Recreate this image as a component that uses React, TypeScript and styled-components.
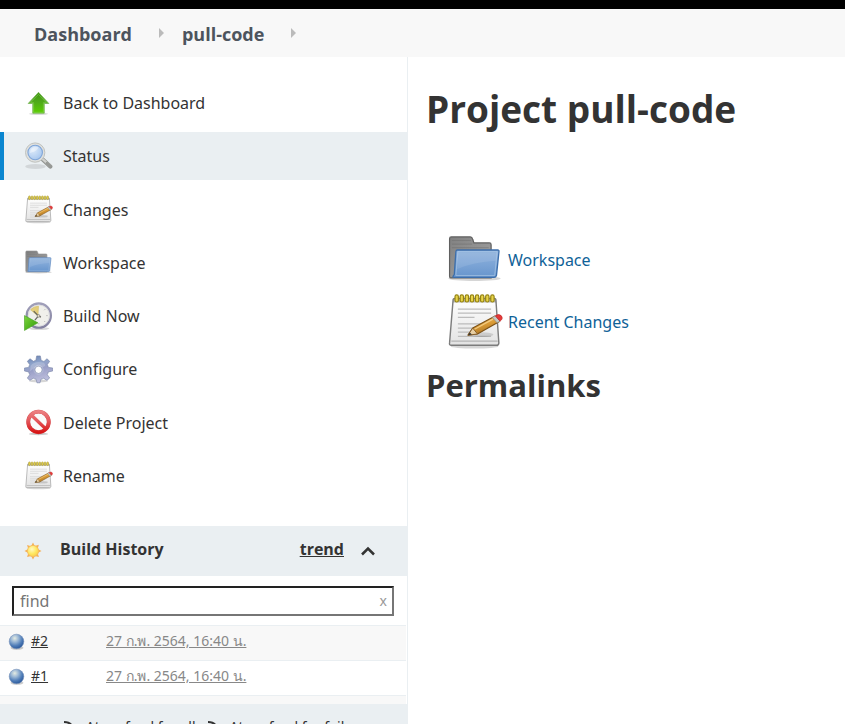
import React, { useId, useState } from "react";
import styled, { createGlobalStyle, css } from "styled-components";

const colors = {
  text: "#333333",
  crumb: "#4d545d",
  link: "#0f6298",
  panel: "#eaeff2",
  soft: "#f8f8f8",
  accent: "#0b86d0",
  muted: "#888888",
};

const GlobalStyle = createGlobalStyle`
  *, *::before, *::after { box-sizing: border-box; }
  body {
    margin: 0;
    background: #ffffff;
    color: ${colors.text};
    font-family: "Noto Sans", "Open Sans", sans-serif;
    font-size: 16px;
    line-height: 24px;
  }
  a { color: inherit; text-decoration: none; }
  ul, ol, h1, h2 { margin: 0; padding: 0; }
  ul, ol { list-style: none; }
`;

const Page = styled.div`
  display: flex;
  flex-direction: column;
  height: 100vh;
  overflow: hidden;
`;

const TopStrip = styled.header`
  flex: none;
  height: 9px;
  background: #000000;
`;

const Breadcrumbs = styled.nav`
  flex: none;
  height: 48px;
  padding: 2px 0 0 34px;
  background: ${colors.soft};
`;

const CrumbList = styled.ol`
  display: flex;
  align-items: center;
  height: 100%;
`;

const Crumb = styled.li`
  display: flex;
  align-items: center;
  color: ${colors.crumb};
  font-family: "Open Sans", sans-serif;
  font-size: 18px;
  font-weight: 700;
  line-height: 24px;
`;

const CrumbArrow = styled.svg`
  display: block;
  width: 5px;
  height: 10px;
  margin: 0 18px 2px 27px;
`;

const Body = styled.div`
  display: flex;
  flex: 1;
  min-height: 0;
`;

const Sidebar = styled.aside`
  flex: 0 0 408px;
  border-right: 1px solid ${colors.panel};
`;

const Tasks = styled.nav`
  padding: 22px 0 26px;
`;

const TaskList = styled.ul`
  display: flex;
  flex-direction: column;
  justify-content: space-between;
  min-height: 421px;
`;

const TaskLink = styled.a<{ $active?: boolean }>`
  display: flex;
  align-items: center;
  gap: 10px;
  height: 48px;
  padding-left: 20px;
  border-left: 4px solid transparent;
  ${({ $active }) =>
    $active &&
    css`
      background: ${colors.panel};
      border-left-color: ${colors.accent};
    `}
`;

const Icon = styled.svg<{ $size: number }>`
  display: block;
  flex: none;
  width: ${({ $size }) => $size}px;
  height: ${({ $size }) => $size}px;
`;

const PanelHeader = styled.div`
  display: flex;
  align-items: center;
  height: 50px;
  padding: 0 31px 4px 24px;
  background: ${colors.panel};
`;

const Weather = styled.span`
  display: flex;
  margin-top: 4px;
`;

const PanelTitle = styled.h2`
  flex: 1;
  margin-left: 18px;
  font-family: "Open Sans", sans-serif;
  font-size: 16px;
  font-weight: 700;
  line-height: 24px;
`;

const TrendLink = styled.a`
  margin-right: 16px;
  font-weight: 700;
  font-family: "Open Sans", sans-serif;
  text-decoration: underline;
`;

const CollapseButton = styled.button`
  display: flex;
  margin-top: 4px;
  padding: 0;
  border: 0;
  background: none;
  color: ${colors.text};
`;

const SearchBox = styled.div`
  display: flex;
  align-items: center;
  height: 30px;
  margin: 10px 13px 9px 12px;
  border: 2px solid;
  border-color: #222222 #767676 #767676 #222222;
`;

const SearchInput = styled.input`
  flex: 1;
  min-width: 0;
  padding: 0 6px;
  border: 0;
  outline: 0;
  background: transparent;
  color: ${colors.text};
  font: inherit;
  &::placeholder { color: #767676; opacity: 1; }
`;

const ClearButton = styled.button`
  padding: 0 5px;
  border: 0;
  background: none;
  color: #999999;
  font: inherit;
  font-size: 14px;
  line-height: 20px;
`;

const BuildTable = styled.table`
  width: calc(100% - 1px);
  border-collapse: separate;
  border-spacing: 0;
  font-size: 14px;
  line-height: 20px;
`;

const BuildRow = styled.tr`
  height: 35px;
  &:nth-child(odd) { background: ${colors.soft}; }
`;

const BuildCell = styled.td<{ $width?: number }>`
  width: ${({ $width }) => ($width ? `${$width}px` : "auto")};
  padding: 0 0 4px;
  border-top: 1px solid ${colors.panel};
  vertical-align: middle;
`;

const BuildName = styled.span`
  display: flex;
  align-items: center;
  gap: 6px;
  padding-left: 8px;
`;

const BuildLink = styled.a<{ $muted?: boolean }>`
  color: ${({ $muted }) => ($muted ? colors.muted : colors.text)};
  text-decoration: underline;
`;

const BuildEnd = styled.div`
  height: 9px;
  margin-right: 1px;
  border-top: 1px solid ${colors.panel};
  background: ${colors.soft};
`;

const Feeds = styled.div`
  display: flex;
  justify-content: flex-end;
  gap: 10px;
  padding: 13px 34px 12px 12px;
  background: ${colors.panel};
  font-size: 14px;
  line-height: 20px;
  white-space: nowrap;
`;

const FeedLink = styled.a`
  display: flex;
  align-items: center;
  gap: 12px;
`;

const Main = styled.main`
  flex: 1;
  min-width: 0;
  padding: 26px 18px;
`;

const Title = styled.h1`
  font-family: "Open Sans", sans-serif;
  font-size: 37px;
  font-weight: 700;
  line-height: 52px;
`;

const Shortcuts = styled.ul`
  display: flex;
  flex-direction: column;
  gap: 5px;
  margin: 96px 0 0 20px;
`;

const ShortcutLink = styled.a`
  display: flex;
  align-items: center;
  gap: 5px;
  color: ${colors.link};
`;

const Subtitle = styled.h2`
  margin-top: 12px;
  font-family: "Open Sans", sans-serif;
  font-size: 31px;
  font-weight: 700;
  line-height: 46px;
`;

type IconProps = { size?: number };

function ArrowUpIcon({ size = 29 }: IconProps) {
  const id = useId();
  return (
    <Icon $size={size} viewBox="0 0 48 48" aria-hidden="true">
      <defs>
        <linearGradient id={id} x1="0" y1="0" x2="0" y2="1">
          <stop offset="0" stopColor="#3f9412" />
          <stop offset=".45" stopColor="#4fa91a" />
          <stop offset="1" stopColor="#5cd000" />
        </linearGradient>
      </defs>
      <ellipse cx="24" cy="41" rx="16" ry="2" fill="#000" opacity=".14" />
      <path d="M24 5.500 41 24H33.500V40H14.500V24H7Z" fill={`url(#${id})`} stroke="#7fba60" strokeWidth="1.500" strokeLinejoin="round" />
      <path d="M24 9 37 22.500H32V38.500H16V22.500H11Z" fill="none" stroke="#9ede70" strokeWidth="1.200" opacity=".5" />
    </Icon>
  );
}

function SearchIcon({ size = 29 }: IconProps) {
  const id = useId();
  return (
    <Icon $size={size} viewBox="0 0 48 48" aria-hidden="true">
      <defs>
        <radialGradient id={id} cx=".35" cy=".3" r=".8">
          <stop offset="0" stopColor="#deebfa" />
          <stop offset="1" stopColor="#a3c4ed" />
        </radialGradient>
      </defs>
      <ellipse cx="19" cy="40.500" rx="17" ry="4" fill="#000" opacity=".1" />
      <path d="M31 29 43.500 40.500" stroke="#929491" strokeWidth="7" strokeLinecap="round" />
      <path d="M31 28.500 43 39.500" stroke="#cfd0cd" strokeWidth="4" strokeLinecap="round" />
      <path d="M38 35 43.500 40" stroke="#979996" strokeWidth="4.500" strokeLinecap="round" />
      <circle cx="18.500" cy="17.500" r="16" fill="#dfe0de" stroke="#bcbebb" strokeWidth="1.500" />
      <circle cx="18.500" cy="17.500" r="12" fill={`url(#${id})`} stroke="#7fa5d8" strokeWidth="1.800" />
      <path d="M10 18C10 10 17 7 24 9C21 15 17 16 10 18Z" fill="#fff" opacity=".4" />
    </Icon>
  );
}

function NotepadIcon({ size = 29 }: IconProps) {
  const id = useId();
  const rings = [9, 13.3, 17.6, 21.9, 26.2, 30.5, 34.8, 39.1];
  const small = size < 40;
  return (
    <Icon $size={size} viewBox="0 0 48 48" aria-hidden="true">
      <defs>
        <linearGradient id={`${id}p`} x1="0" y1="0" x2="0" y2="1">
          <stop offset="0" stopColor="#ffffff" />
          <stop offset="1" stopColor="#e2e2e2" />
        </linearGradient>
        <linearGradient id={`${id}w`} x1=".2" y1="0" x2=".6" y2="1">
          <stop offset="0" stopColor="#f0c069" />
          <stop offset=".5" stopColor="#d99a35" />
          <stop offset="1" stopColor="#a06c22" />
        </linearGradient>
      </defs>
      <ellipse cx="24" cy="45" rx="20" ry="1.800" fill="#000" opacity=".16" />
      <path
        d="M6 5.500Q6 4.500 7.500 4.500H40.500Q42 4.500 42 5.500L44.500 42Q44.500 44 42.500 44H4.500Q2.500 44 3 42Z"
        fill={`url(#${id}p)`}
        stroke={small ? "#a3a3a3" : "#7c7c7c"}
        strokeWidth="1.200"
      />
      <path d="M6 5H42L42.300 8H5.800Z" fill="#777" opacity=".5" />
      <path d="M4.500 40.500H43.500" stroke="#b4b4b4" strokeWidth="1.200" />
      <path
        d="M10 13.500H38M10 17H38M10 20.500H24M10 26H33M10 29.500H25M10 33H22M10 36.500H38"
        stroke={small ? "#d2d2d2" : "#bcbcbc"}
        strokeWidth="1.100"
      />
      {rings.map((x) => (
        <rect
          key={x}
          x={x - 1.4}
          y="1.600"
          width="2.800"
          height="6"
          rx="1.300"
          fill="#e8d44a"
          stroke={small ? "#ab9c38" : "#96840f"}
          strokeWidth="1"
        />
      ))}
      <ellipse cx="30" cy="35" rx="10" ry="2" fill="#000" opacity=".12" />
      <path d="M18.500 35.500 22.500 29.500 41 19.500 45 24 26.500 34.500Z" fill={`url(#${id}w)`} stroke="#7c5116" strokeWidth=".9" strokeLinejoin="round" />
      <path d="M18.500 35.500 22.500 29.500 26.500 34.500Z" fill="#e8cfa4" stroke="#7c5520" strokeWidth=".7" />
      <path d="M18.500 35.500 20 33.200 21.800 34.900Z" fill="#333" />
      <path d="M39 20.600 41.500 19.200 45.500 23.700 43 25.100Z" fill="#c4c8c3" stroke="#8b8d89" strokeWidth=".5" />
      <path d="M41.500 19.200Q44.500 17.200 46.400 19Q48.600 21.700 45.500 23.700Z" fill="#e43a3a" stroke="#c22424" strokeWidth=".6" />
      <path d="M24 30.500 39.500 22" stroke="#ffe0a0" strokeWidth="1" opacity=".7" />
    </Icon>
  );
}

function FolderIcon({ size = 29 }: IconProps) {
  const id = useId();
  const small = size < 40;
  return (
    <Icon $size={size} viewBox="0 0 48 48" aria-hidden="true">
      <defs>
        <linearGradient id={`${id}b`} x1="0" y1="0" x2="1" y2="1">
          <stop offset="0" stopColor="#808080" />
          <stop offset=".7" stopColor="#9c9c9c" />
          <stop offset="1" stopColor="#c4c4c4" />
        </linearGradient>
        <linearGradient id={`${id}f`} x1="0" y1="0" x2="0" y2="1">
          <stop offset="0" stopColor="#8fb2dc" />
          <stop offset=".5" stopColor="#7da5d6" />
          <stop offset="1" stopColor="#6795cd" />
        </linearGradient>
      </defs>
      <ellipse cx="24" cy="40" rx="22" ry="2" fill="#000" opacity=".16" />
      <path
        d="M4 39.500Q3 39.500 3 38V6.500Q3 5 4.500 5H20.500Q22 5 22.500 7L23.500 10H36.500Q38 10 38 11.500V39.500Z"
        fill={`url(#${id}b)`}
        stroke={small ? "#8a8a8a" : "#5f5f5f"}
        strokeWidth="1"
      />
      <path d="M5 8H21M5 11H22M5 14H36" stroke="#666" strokeWidth="1" opacity=".35" />
      <path
        d="M9.500 16H43.500Q44.800 16 44.600 17.500L42.500 37.500Q42 39 40.500 39H6.500Q5 39 7 36.500L8.300 17.500Q8.500 16 9.500 16Z"
        fill={`url(#${id}f)`}
        stroke={small ? "#5f8abf" : "#3c6eab"}
        strokeWidth="1.100"
      />
      <path d="M10 17.400H43.100L41 37.500H8.300Z" fill="none" stroke="#b5cfea" strokeWidth=".8" opacity=".6" />
      <path d="M10 18H42.800L42 25Q23 26 9.500 32Z" fill="#fff" opacity=".1" />
    </Icon>
  );
}

function BuildIcon({ size = 29 }: IconProps) {
  const id = useId();
  return (
    <Icon $size={size} viewBox="0 0 48 48" aria-hidden="true">
      <defs>
        <linearGradient id={`${id}r`} x1="0" y1="0" x2="0" y2="1">
          <stop offset="0" stopColor="#a09fb9" />
          <stop offset="1" stopColor="#8381a0" />
        </linearGradient>
        <linearGradient id={`${id}g`} x1="0" y1="0" x2="1" y2="1">
          <stop offset="0" stopColor="#7ed640" />
          <stop offset="1" stopColor="#2f9a06" />
        </linearGradient>
      </defs>
      <ellipse cx="25" cy="44" rx="17" ry="2.500" fill="#000" opacity=".15" />
      <circle cx="24.500" cy="22.500" r="20" fill="#f0f0eb" stroke={`url(#${id}r)`} strokeWidth="3.800" />
      <circle cx="24.500" cy="22.500" r="17.500" fill="none" stroke="#d5d5db" strokeWidth="1.200" />
      <path d="M23 23 11 13Q16 7 24 7Z" fill="#e4ce7c" stroke="#d3bc62" />
      <path d="M16 15 24 23 28 25M24 23 18 30" fill="none" stroke="#66665e" strokeWidth="2" />
      <circle cx="24" cy="23" r="2.300" fill="#e4dcc0" stroke="#777" />
      <path d="M39 22.500H37M24.500 37V35M35 12 33.500 13.500M35 33 33.500 31.500" stroke="#aaa" strokeWidth="1.500" />
      <path d="M.8 22.500V47L23 34.500Z" fill={`url(#${id}g)`} stroke="#54a832" strokeWidth="1.200" />
    </Icon>
  );
}

function GearIcon({ size = 29 }: IconProps) {
  const id = useId();
  return (
    <Icon $size={size} viewBox="0 0 48 48" aria-hidden="true">
      <defs>
        <linearGradient id={id} x1="0" y1="0" x2=".3" y2="1">
          <stop offset="0" stopColor="#627dad" />
          <stop offset=".35" stopColor="#8fa4cb" />
          <stop offset=".6" stopColor="#9ba0c8" />
          <stop offset="1" stopColor="#bcbddc" />
        </linearGradient>
      </defs>
      <ellipse cx="24" cy="43" rx="16" ry="2.500" fill="#000" opacity=".16" />
      <path
        fillRule="evenodd"
        fill={`url(#${id})`}
        stroke="#7582a5"
        strokeWidth="1"
        strokeLinejoin="round"
        d="M21 1.500H27L28.500 9Q31 9.500 33 10.800L38 6.200 42.500 10.500 38.500 16Q39.700 18 40.200 20.500L47.500 21.500V26.500L40.200 28Q39.700 30.500 38.500 32.500L42.500 38 38 42 32.500 38.500Q30.300 39.700 28 40.200L26.500 46H21.500L20 40.200Q17.500 39.700 15.500 38.500L9.500 42 5.500 38 9.500 32.500Q8.300 30.500 7.800 28L.800 26.500V21.500L7.800 20.500Q8.300 18 9.500 16L5.500 10.500 10 6.200 15.500 10.500Q17.500 9.300 19.500 9ZM24 18.500A6 6 0 1 0 24 30.500A6 6 0 1 0 24 18.500Z"
      />
      <circle cx="24" cy="24.500" r="7.500" fill="none" stroke="#c3cbe2" strokeWidth="1.500" opacity=".6" />
      <path d="M11 18Q18 9 33 13Q38 19 31 20Q17 19 10 27Z" fill="#fff" opacity=".2" />
    </Icon>
  );
}

function DeleteIcon({ size = 29 }: IconProps) {
  const id = useId();
  return (
    <Icon $size={size} viewBox="0 0 48 48" aria-hidden="true">
      <defs>
        <linearGradient id={id} gradientUnits="userSpaceOnUse" x1="0" y1="4" x2="0" y2="43">
          <stop offset="0" stopColor="#ec8385" />
          <stop offset=".45" stopColor="#e4565a" />
          <stop offset="1" stopColor="#d60c0c" />
        </linearGradient>
      </defs>
      <ellipse cx="24" cy="43" rx="16" ry="2" fill="#000" opacity=".2" />
      <circle cx="24" cy="23" r="17" fill="#fafafa" stroke="#d2494b" strokeWidth="6.500" />
      <circle cx="24" cy="23" r="17" fill="none" stroke={`url(#${id})`} strokeWidth="5.500" />
      <path d="M12 11.500 36 34.500" stroke={`url(#${id})`} strokeWidth="5.500" />
    </Icon>
  );
}

function SunIcon() {
  const id = useId();
  return (
    <Icon $size={18} viewBox="0 0 18 18" aria-hidden="true">
      <defs>
        <radialGradient id={id} cx=".4" cy=".35" r=".7">
          <stop offset="0" stopColor="#fffac2" />
          <stop offset=".6" stopColor="#ffe75e" />
          <stop offset="1" stopColor="#f8cb50" />
        </radialGradient>
      </defs>
      <path d="M9 .500 10.800 4 14.800 2.800 13.700 6.900 17.500 9 13.700 10.900 14.900 15 10.900 13.900 9 17.500 7.100 13.900 3.100 15 4.300 11 .500 9 4.200 7 3.100 3 7 4.200Z" fill="#f5b054" />
      <circle cx="9" cy="9" r="5.600" fill={`url(#${id})`} stroke="#f5bd62" strokeWidth=".9" />
    </Icon>
  );
}

function BallIcon() {
  const id = useId();
  return (
    <Icon $size={17} viewBox="0 0 17 17" aria-hidden="true">
      <defs>
        <radialGradient id={id} cx=".38" cy=".28" r=".72">
          <stop offset="0" stopColor="#e4ebe2" />
          <stop offset=".35" stopColor="#9cb8d5" />
          <stop offset=".7" stopColor="#527fb9" />
          <stop offset="1" stopColor="#2c5a9c" />
        </radialGradient>
      </defs>
      <ellipse cx="9" cy="14.800" rx="6.500" ry="2" fill="#000" opacity=".2" />
      <circle cx="8.500" cy="8.500" r="7.300" fill={`url(#${id})`} stroke="#7591b8" strokeWidth=".6" />
    </Icon>
  );
}

function FeedIcon() {
  return (
    <Icon $size={12} viewBox="0 0 12 12" aria-hidden="true">
      <circle cx="2.500" cy="9.500" r="1.500" fill="#333" />
      <path d="M2 1Q11 1 11 10M2 5Q7 5 7 10" fill="none" stroke="#333" strokeWidth="2" />
    </Icon>
  );
}

const tasks = [
  { label: "Back to Dashboard", Glyph: ArrowUpIcon },
  { label: "Status", Glyph: SearchIcon, active: true },
  { label: "Changes", Glyph: NotepadIcon },
  { label: "Workspace", Glyph: FolderIcon },
  { label: "Build Now", Glyph: BuildIcon },
  { label: "Configure", Glyph: GearIcon },
  { label: "Delete Project", Glyph: DeleteIcon },
  { label: "Rename", Glyph: NotepadIcon },
];

const builds = [
  { name: "#2", date: "27 ก.พ. 2564, 16:40 น." },
  { name: "#1", date: "27 ก.พ. 2564, 16:40 น." },
];

export default function App() {
  const [query, setQuery] = useState("");
  return (
    <>
      <GlobalStyle />
      <Page>
        <TopStrip />
        <Breadcrumbs aria-label="Breadcrumb">
          <CrumbList>
            {["Dashboard", "pull-code"].map((name) => (
              <Crumb key={name}>
                <a href="#">{name}</a>
                <CrumbArrow viewBox="0 0 5 10" aria-hidden="true">
                  <path d="M0 0 5 5 0 10Z" fill="#bbbbbb" />
                </CrumbArrow>
              </Crumb>
            ))}
          </CrumbList>
        </Breadcrumbs>
        <Body>
          <Sidebar>
            <Tasks aria-label="Project">
              <TaskList>
                {tasks.map(({ label, Glyph, active }) => (
                  <li key={label}>
                    <TaskLink href="#" $active={active} aria-current={active ? "page" : undefined}>
                      <Glyph />
                      {label}
                    </TaskLink>
                  </li>
                ))}
              </TaskList>
            </Tasks>
            <section>
              <PanelHeader>
                <Weather>
                  <SunIcon />
                </Weather>
                <PanelTitle>Build History</PanelTitle>
                <TrendLink href="#">trend</TrendLink>
                <CollapseButton type="button" aria-label="Collapse">
                  <Icon $size={16} viewBox="0 0 16 16" aria-hidden="true">
                    <path d="M2 11.500 8 5.500 14 11.500" fill="none" stroke="currentColor" strokeWidth="2.500" />
                  </Icon>
                </CollapseButton>
              </PanelHeader>
              <SearchBox>
                <SearchInput
                  aria-label="Find build"
                  placeholder="find"
                  value={query}
                  onChange={(e) => setQuery(e.target.value)}
                />
                <ClearButton type="button" aria-label="Clear" onClick={() => setQuery("")}>x</ClearButton>
              </SearchBox>
              <BuildTable>
                <tbody>
                  {builds.map((build) => (
                    <BuildRow key={build.name}>
                      <BuildCell $width={106}>
                        <BuildName>
                          <BallIcon />
                          <BuildLink href="#">{build.name}</BuildLink>
                        </BuildName>
                      </BuildCell>
                      <BuildCell>
                        <BuildLink href="#" $muted>{build.date}</BuildLink>
                      </BuildCell>
                    </BuildRow>
                  ))}
                </tbody>
              </BuildTable>
              <BuildEnd />
              <Feeds>
                <FeedLink href="#"><FeedIcon />Atom feed for all</FeedLink>
                <FeedLink href="#"><FeedIcon />Atom feed for failures</FeedLink>
              </Feeds>
            </section>
          </Sidebar>
          <Main>
            <Title>Project pull-code</Title>
            <Shortcuts>
              <li><ShortcutLink href="#"><FolderIcon size={57} />Workspace</ShortcutLink></li>
              <li><ShortcutLink href="#"><NotepadIcon size={57} />Recent Changes</ShortcutLink></li>
            </Shortcuts>
            <Subtitle>Permalinks</Subtitle>
          </Main>
        </Body>
      </Page>
    </>
  );
}
